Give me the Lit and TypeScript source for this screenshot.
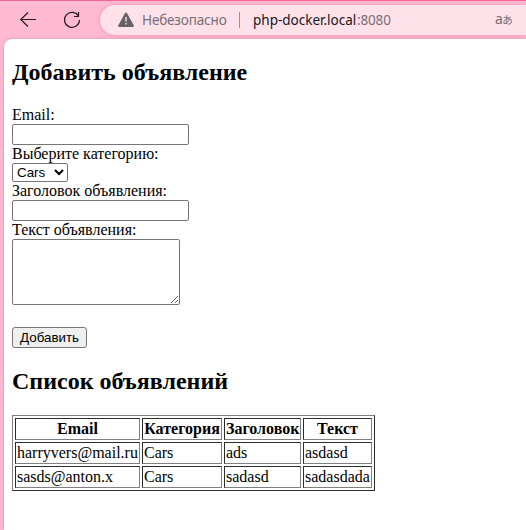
import { LitElement, html, css } from "lit";
import { customElement } from "lit/decorators.js";

@customElement("browser-bar")
class BrowserBar extends LitElement {
  static styles = css`
    :host {
      display: flex;
      box-sizing: border-box;
      height: 39px;
      border-top: 1px solid #ee6797;
      background: #ffb9d0;
      font-family: "Noto Sans", "Noto Sans CJK JP", sans-serif;
      font-size: 13.5px;
      color: #757075;
    }
    svg { display: block; flex: none; }
    .nav { width: 100px; flex: none; }
    .address {
      display: flex;
      align-items: center;
      flex: 1;
      height: 30px;
      margin-top: 4px;
      border-radius: 15px 0 0 15px;
      background: #ffe1ea;
      box-shadow: 0 0 4px #e997b4;
      white-space: nowrap;
      line-height: 20px;
    }
    .warn { margin-left: 18px; }
    .status { margin-left: 8px; width: 86px; letter-spacing: -0.15px; }
    .rule { width: 1px; height: 16px; margin: 0 13px 0 11px; background: #a18f96; }
    .host { color: #19171b; width: 104px; }
    .port { flex: 1; letter-spacing: -0.15px; }
    .lang { width: 31px; font-size: 14px; letter-spacing: -0.5px; line-height: 18px; margin-top: -2px; }
    .lang .kana { font-size: 10.5px; }
  `;
  render() {
    return html`
      <svg class="nav" width="100" height="38" viewBox="0 1 100 38" fill="none" stroke="#241c20" stroke-width="1.2">
        <path d="M36 19.5H20.5M28 12.5L20.7 19.5L28 26.5" />
        <path d="M78.6 16.3A7.5 7.5 0 1 0 79.5 20M78.5 12V16.5H74" />
      </svg>
      <div class="address">
        <svg class="warn" width="16" height="16" viewBox="0 0 16 16">
          <path d="M7 1.2Q8 -.2 9 1.2L15.7 13.3Q16.2 15 14.7 15H1.3Q-.2 15 .3 13.3Z" fill="#656165" />
          <path d="M8 5V9.4M8 11V12.6" stroke="#ffe1ea" stroke-width="1.4" />
        </svg>
        <span class="status">Небезопасно</span>
        <span class="rule"></span>
        <span class="host">php-docker.local</span><span class="port">:8080</span>
        <span class="lang">a<span class="kana">あ</span></span>
      </div>
    `;
  }
}

@customElement("app-root")
class AppRoot extends LitElement {
  static styles = css`
    :host {
      display: flex;
      flex-direction: column;
      height: 530px;
      overflow: hidden;
      background: #ffb9d0;
    }
    browser-bar { flex: none; }
    main {
      flex: 1;
      margin-left: 4px;
      padding: 20px 8px 0;
      border-top-left-radius: 8px;
      background: #fff;
      box-shadow: 0 0 3px #d98aa6;
      color: #000;
      font: 16px/18px "Liberation Serif", serif;
    }
    h2 { margin: 0; font-size: 24px; line-height: 27px; font-weight: 700; }
    form { display: flex; flex-direction: column; align-items: flex-start; margin: 20px 0; }
    label { height: 18px; }
    input, select, textarea, button {
      box-sizing: border-box;
      margin: 0;
      font: 13.333px "Liberation Sans", sans-serif;
      color: #000;
      border: 1px solid #767676;
      border-radius: 2px;
      background-color: #fff;
    }
    input { width: 177px; height: 21px; }
    select { width: 56px; height: 19px; }
    textarea { width: 168px; height: 66px; }
    button {
      width: 75px;
      height: 21px;
      margin-top: 22px;
      padding: 0;
      border-radius: 3px;
      background-color: #efefef;
    }
    table {
      width: 363px;
      margin-top: 20px;
      table-layout: fixed;
      border: 1px outset #808080;
      border-spacing: 2px;
    }
    th, td { height: 18px; padding: 1px; border: 1px inset #808080; white-space: nowrap; line-height: 18px; }
    .email { width: 121px; }
    .category { width: 76px; }
    .title { width: 73px; }
  `;
  private ads = [
    ["harryvers@mail.ru", "Cars", "ads", "asdasd"],
    ["sasds@anton.x", "Cars", "sadasd", "sadasdada"],
  ];
  render() {
    return html`
      <browser-bar></browser-bar>
      <main>
        <h2>Добавить объявление</h2>
        <form @submit=${(e: Event) => e.preventDefault()}>
          <label for="email">Email:</label>
          <input id="email" type="email" />
          <label for="category">Выберите категорию:</label>
          <select id="category"><option>Cars</option></select>
          <label for="title">Заголовок объявления:</label>
          <input id="title" />
          <label for="text">Текст объявления:</label>
          <textarea id="text"></textarea>
          <button>Добавить</button>
        </form>
        <h2>Список объявлений</h2>
        <table>
          <thead>
            <tr>
              <th class="email">Email</th>
              <th class="category">Категория</th>
              <th class="title">Заголовок</th>
              <th>Текст</th>
            </tr>
          </thead>
          <tbody>
            ${this.ads.map((ad) => html`<tr>${ad.map((v) => html`<td>${v}</td>`)}</tr>`)}
          </tbody>
        </table>
      </main>
    `;
  }
}
